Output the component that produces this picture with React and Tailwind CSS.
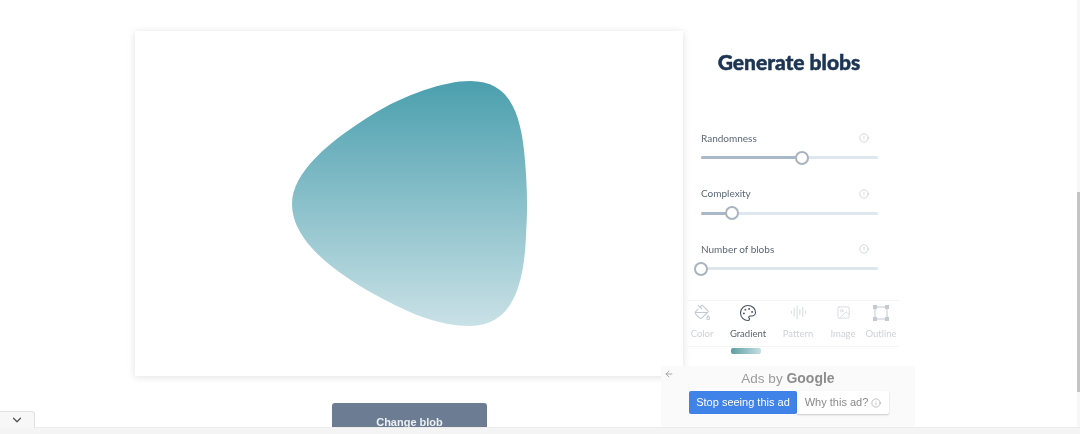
import { Palette, PaintBucket, Image as ImageIcon, AudioLines, ChevronDown, ArrowLeft, Info, CircleAlert } from 'lucide-react';

const SLIDERS = [
  { label: 'Randomness', pct: 57 },
  { label: 'Complexity', pct: 17.5 },
  { label: 'Number of blobs', pct: 0 },
];

function OutlineIcon() {
  return (
    <svg width="16" height="16" viewBox="0 0 16 16" fill="none" stroke="currentColor" strokeWidth="1">
      <rect x="2" y="2" width="12" height="12" />
      <rect x="0.5" y="0.5" width="3" height="3" fill="currentColor" />
      <rect x="12.5" y="0.5" width="3" height="3" fill="currentColor" />
      <rect x="0.5" y="12.5" width="3" height="3" fill="currentColor" />
      <rect x="12.5" y="12.5" width="3" height="3" fill="currentColor" />
    </svg>
  );
}

// widths keep each label centred under its icon at the spot in the picture
const TABS = [
  { label: 'Color', icon: <PaintBucket size={17} strokeWidth={1.5} />, w: 'w-[26px]' },
  { label: 'Gradient', icon: <Palette size={18} strokeWidth={1.5} />, w: 'w-[66px]', active: true },
  { label: 'Pattern', icon: <AudioLines size={17} strokeWidth={1} />, w: 'w-[34px]' },
  { label: 'Image', icon: <ImageIcon size={15} strokeWidth={1} />, w: 'w-[56px]' },
  { label: 'Outline', icon: <OutlineIcon />, w: 'w-[20px]' },
];

function Slider({ label, pct }) {
  return (
    <div className="h-[55.5px]">
      <div className="flex h-[14px] items-center justify-between pr-[9px]">
        <span className="text-[10px] text-[#5b6676]">{label}</span>
        <CircleAlert size={10} strokeWidth={1} className="text-[#9aa3ad]" />
      </div>
      <div className="relative mt-[11px] h-[3px] rounded-full bg-[#dfe7ee]">
        <div className="h-full rounded-full bg-[#a9b8c9]" style={{ width: `${pct}%` }} />
        <div
          className="absolute top-[-5.5px] ml-[-7px] size-[14px] rounded-full border-2 border-[#aab4bf] bg-white"
          style={{ left: `${pct}%` }}
        />
      </div>
    </div>
  );
}

export default function App() {
  return (
    <div className="relative h-[434px] w-[1080px] overflow-hidden bg-white font-['Lato',sans-serif] blur-[0.5px]">
      <div className="flex pl-[135px] pt-[31px]">
        {/* canvas + button */}
        <div className="w-[548px] shrink-0">
          <div className="h-[345px] bg-white shadow-[0_1px_8px_rgba(0,0,0,0.12)]">
            <svg width="548" height="345" viewBox="135 31 548 345">
              <defs>
                <linearGradient id="blob" x1="0" y1="0" x2="0" y2="1">
                  <stop offset="0" stopColor="#4b9fae" />
                  <stop offset="1" stopColor="#c9e1e6" />
                </linearGradient>
              </defs>
              <path
                fill="url(#blob)"
                d="M470 81 C505 81 519 105 524 150 C527 180 528 205 526 235 C524 290 510 326 470 326 C440 326 412 314 385 300 C345 279 292 245 292 204 C292 172 330 141 370 116 C405 94 445 81 470 81 Z"
              />
            </svg>
          </div>
          <button className="ml-[197px] mt-[27px] block h-[40px] w-[155px] rounded-t-[3px] bg-[#6c7d93] pb-[2px] font-['Liberation_Sans',sans-serif] text-[11px] font-bold text-[#eef1f4]">
            Change blob
          </button>
        </div>

        {/* controls */}
        <div className="w-[212px] shrink-0 pl-[18px] pr-[6px]">
          <h1 className="ml-[-12px] mt-[16px] text-center text-[21px] leading-[30px] font-black text-[#1c3553] [-webkit-text-stroke:0.5px_#1c3553]">
            Generate blobs
          </h1>
          <div className="mt-[54px] w-[177px]">
            {SLIDERS.map((s) => (
              <Slider key={s.label} {...s} />
            ))}
          </div>
          <div className="ml-[-14px] mt-[2px] flex h-[47px] w-[212px] items-start border-y border-[#f3f5f7] pl-[2px] pt-[3px]">
            {TABS.map((t) => (
              <div
                key={t.label}
                className={`flex shrink-0 flex-col items-center gap-[6px] ${t.w} ${t.active ? 'text-[#47525f]' : 'text-[#c3cad1]'}`}
              >
                <div className="flex h-[18px] items-center">{t.icon}</div>
                <span className={`text-[9.5px] leading-[12px] ${t.active ? 'text-[#5c6672]' : 'text-[#ccd2d8]'}`}>{t.label}</span>
              </div>
            ))}
          </div>
          <div className="ml-[30px] mt-[1px] h-[6px] w-[30px] rounded-[2px] bg-gradient-to-r from-[#5b9fa5] to-[#c6dfe2]" />
        </div>
      </div>

      {/* ad overlay */}
      <div className="absolute left-[661px] top-[366px] h-[62px] w-[254px] bg-[#fafafa]">
        <ArrowLeft size={10} className="absolute left-[3px] top-[3px] text-[#9a9a9a]" />
        <div className="mt-[3px] text-center font-['Liberation_Sans',sans-serif] text-[13.5px] leading-[18px] text-[#9b9b9b]">
          Ads by <span className="text-[14px] font-bold text-[#8d8d8d]">Google</span>
        </div>
        <div className="ml-[28px] mt-[3px] flex h-[23px] font-['Liberation_Sans',sans-serif] text-[11px]">
          <div className="flex w-[108px] items-center justify-center rounded-[2px] bg-[#3f82e8] text-white">Stop seeing this ad</div>
          <div className="flex w-[92px] items-center justify-center gap-[3px] rounded-r-[2px] bg-white text-[#8a8a8a] shadow-[0_1px_2px_rgba(0,0,0,0.2)]">
            Why this ad? <Info size={10} strokeWidth={1.25} />
          </div>
        </div>
      </div>

      {/* scrollbar */}
      <div className="absolute right-0 top-0 h-full w-[3px] bg-[#f7f7f7]">
        <div className="mt-[192px] h-[200px] bg-[#c4c4c4]" />
      </div>

      {/* bottom bar */}
      <div className="absolute inset-x-0 bottom-0 h-[7px] border-t border-[#ececec] bg-[#f4f4f4]" />
      <div className="absolute bottom-[6px] left-0 flex h-[17px] w-[35px] items-center justify-center rounded-tr-[3px] border-r border-t border-[#e2e2e2] bg-[#f7f7f7]">
        <ChevronDown size={14} strokeWidth={2.25} className="text-[#555]" />
      </div>
    </div>
  );
}
